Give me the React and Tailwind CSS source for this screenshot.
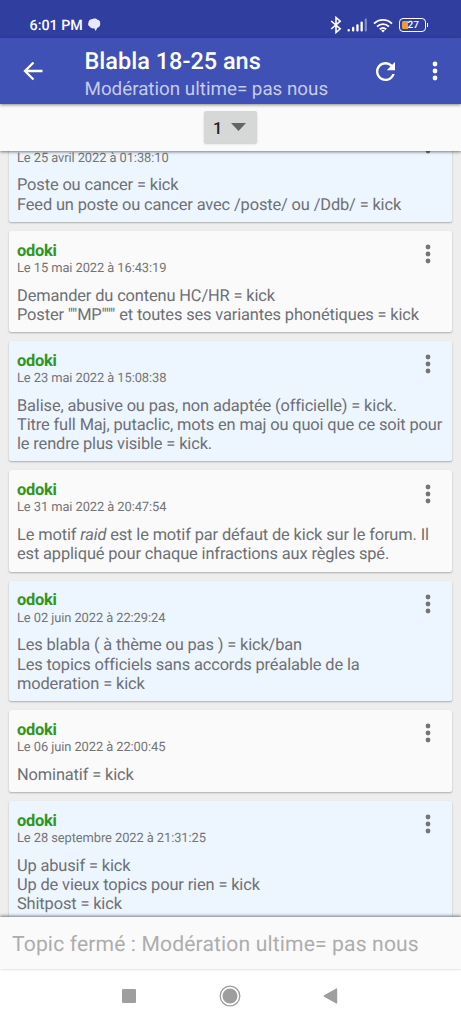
import React from 'react';

const posts = [
  { id: 1, date: 'Le 25 avril 2022 à 01:38:10', lines: ['Poste ou cancer = kick', 'Feed un poste ou cancer avec /poste/ ou /Ddb/ = kick'] },
  { id: 2, date: 'Le 15 mai 2022 à 16:43:19', lines: ['Demander du contenu HC/HR = kick', 'Poster ""MP""" et toutes ses variantes phonétiques = kick'] },
  {
    id: 3,
    date: 'Le 23 mai 2022 à 15:08:38',
    lines: [
      'Balise, abusive ou pas, non adaptée (officielle) = kick.',
      'Titre full Maj, putaclic, mots en maj ou quoi que ce soit pour',
      'le rendre plus visible = kick.',
    ],
  },
  {
    id: 4,
    date: 'Le 31 mai 2022 à 20:47:54',
    lines: [
      <>Le motif <em>raid</em> est le motif par défaut de kick sur le forum. Il</>,
      'est appliqué pour chaque infractions aux règles spé.',
    ],
  },
  {
    id: 5,
    date: 'Le 02 juin 2022 à 22:29:24',
    lines: ['Les blabla ( à thème ou pas ) = kick/ban', 'Les topics officiels sans accords préalable de la', 'moderation = kick'],
  },
  { id: 6, date: 'Le 06 juin 2022 à 22:00:45', lines: ['Nominatif = kick'] },
  {
    id: 7,
    date: 'Le 28 septembre 2022 à 21:31:25',
    lines: ['Up abusif = kick', 'Up de vieux topics pour rien = kick', 'Shitpost = kick'],
  },
];

const MoreIcon = ({ className }) => (
  <svg viewBox="0 0 6 20" className={className} fill="currentColor">
    <circle cx="3" cy="3" r="2.4" />
    <circle cx="3" cy="10" r="2.4" />
    <circle cx="3" cy="17" r="2.4" />
  </svg>
);

const StatusBar = () => (
  <div className="flex h-[38px] shrink-0 items-center bg-[#303f9f] pt-[12px] pr-[33px] pl-[29.5px] text-white">
    <span className="pt-[2px] text-[14.3px] leading-4 font-medium">6:01 PM</span>
    <svg viewBox="0 0 14 14" className="ml-[4px] h-[14px] w-[14px]" fill="#e8eafa">
      <path d="M4.6 1.2C7-.2 9.6.6 10.4 1.7c1.9.1 3.1 1.7 2.7 3.6.5 2.4-.8 4.1-2.7 4.5L8.6 13 7.2 10.3C5.2 10.8 3.2 9.9 2.7 8.6 1 7.7.7 5.9 1.5 4.7 1.2 3 2.7 1.3 4.6 1.2z" />
    </svg>
    <div className="ml-auto flex items-center">
      <svg viewBox="0 0 12 18" className="h-[18px] w-[12px]" fill="none" stroke="currentColor" strokeWidth="1.6">
        <path d="M1.2 5l9 7.8L6 16.5V1.5l4.2 3.7-9 7.8" />
      </svg>
      <svg viewBox="0 0 20 14" className="ml-[5px] h-[14px] w-[20px]" fill="currentColor">
        <rect x="0.5" y="11" width="2.4" height="2.5" rx="1" />
        <rect x="5" y="8.8" width="2.3" height="4.7" rx="1" />
        <rect x="9.3" y="6.3" width="2.3" height="7.2" rx="1" />
        <rect x="13.5" y="3.5" width="2.3" height="10" rx="1" />
        <rect x="17.7" y="0.5" width="2.2" height="13" rx="1" opacity="0.4" />
      </svg>
      <svg viewBox="0 0 20 15" className="ml-[6px] h-[15px] w-[20px]" fill="none" stroke="currentColor" strokeWidth="1.9">
        <path d="M1 5.6c5.2-5 12.8-5 18 0M4 8.6c3.5-3.3 8.5-3.3 12 0M6.8 11.3c2-1.7 4.4-1.7 6.4 0" />
        <path d="M8.1 12.5L10 14.4l1.9-1.9c-1.2-.9-2.6-.9-3.8 0z" fill="currentColor" stroke="none" />
      </svg>
      <div className="ml-[6px] flex items-center">
        <div className="flex h-[14px] w-[27px] items-center rounded-[4px] border-[1.5px] border-white pl-[2px]">
          <span className="h-[8px] w-[6px] rounded-l-[1.5px] bg-[#f09a33]" />
          <span className="pt-px text-[10px] leading-[10px] font-medium">27</span>
        </div>
        <span className="ml-px h-[4px] w-[1.5px] bg-white" />
      </div>
    </div>
  </div>
);

const AppBar = () => (
  <header className="z-10 flex h-[66px] shrink-0 items-center bg-[#3f51b5] pr-[23px] pl-[23px] text-white shadow-[0_1px_3px_rgba(0,0,0,0.45)]">
    <svg viewBox="0 0 20 20" className="h-[20px] w-[20px]" fill="none" stroke="currentColor" strokeWidth="2.3">
      <path d="M19.5 10H2.5M10.5 1.5L2 10l8.5 8.5" />
    </svg>
    <div className="ml-[41.5px] pt-[8px] whitespace-nowrap">
      <h1 className="text-[23.5px] leading-[28px] font-medium">Blabla 18-25 ans</h1>
      <p className="text-[18.8px] leading-[28px] text-[#c5cbe9]">Modération ultime= pas nous</p>
    </div>
    <svg viewBox="4 4 16 16" className="ml-auto h-[19px] w-[19px]" fill="currentColor">
      <path d="M17.65 6.35C16.2 4.9 14.21 4 12 4c-4.42 0-7.99 3.58-7.99 8s3.57 8 7.99 8c3.73 0 6.84-2.55 7.73-6h-2.08c-.82 2.33-3.04 4-5.65 4-3.31 0-6-2.69-6-6s2.69-6 6-6c1.66 0 3.14.69 4.22 1.78L13 11h7V4l-2.35 2.35z" />
    </svg>
    <MoreIcon className="ml-[37px] h-[20px] w-[6px]" />
  </header>
);

const PageBar = () => (
  <div className="z-[5] flex h-[47px] shrink-0 items-center justify-center bg-[#fafafa] shadow-[0_1px_3px_rgba(0,0,0,0.5)]">
    <button className="mb-px flex h-[32px] w-[53px] items-center rounded-[2px] bg-[#d6d7d7] pl-[9px] shadow-[0_1px_2px_rgba(0,0,0,0.2)]">
      <span className="w-[9px] pt-[3px] text-[16.4px] leading-5 font-medium text-[#212121]">1</span>
      <svg viewBox="0 0 15 8" className="ml-[9px] h-[8px] w-[15px]" fill="#646464">
        <path d="M0 0h15L7.5 8z" />
      </svg>
    </button>
  </div>
);

const Post = ({ post, tinted }) => (
  <article
    className={`shrink-0 rounded-[2px] px-[8px] pt-[10.8px] pb-[6.6px] shadow-[0_1px_2px_rgba(0,0,0,0.28)] ${
      tinted ? 'bg-[#edf5ff]' : 'bg-[#fafafa]'
    }`}
  >
    <div className="flex justify-between pr-[13px]">
      <div>
        <p className="text-[16.4px] leading-[19.2px] font-bold tracking-[-0.25px] text-[#2f9620]">odoki</p>
        <p className="text-[12.9px] leading-[15.4px] tracking-[-0.08px] text-[#757575]">{post.date}</p>
      </div>
      <MoreIcon className="mt-[2.6px] h-[20px] w-[6px] text-[#757575]" />
    </div>
    <div className="mt-[10.3px] mb-[0.3px] text-[16.4px] leading-[19.25px] tracking-[-0.13px] whitespace-nowrap text-[#6d7074]">
      {post.lines.map((line, index) => (
        <p key={index}>{line}</p>
      ))}
    </div>
  </article>
);

const NavBar = () => (
  <nav className="flex h-[55px] shrink-0 items-center justify-between bg-white pr-[123.5px] pb-[1px] pl-[122px] text-[#9e9e9e]">
    <span className="h-[14px] w-[14px] rounded-[1px] bg-[#9e9e9e]" />
    <svg viewBox="0 0 22 22" className="ml-[2px] h-[22px] w-[22px]" fill="currentColor">
      <circle cx="11" cy="11" r="9.8" fill="none" stroke="currentColor" strokeWidth="1.3" />
      <circle cx="11" cy="11" r="7.5" />
    </svg>
    <svg viewBox="0 0 15 16" className="h-[16px] w-[15px]" fill="currentColor">
      <path d="M1 7.3L13.3.4c.5-.2.9 0 .9.5v14.2c0 .5-.4.7-.9.5L1 8.7c-.5-.4-.5-1 0-1.4z" />
    </svg>
  </nav>
);

const App = () => {
  return (
    <div className="flex h-[1024px] w-[461px] flex-col overflow-hidden bg-[#eeeeee] font-[Roboto,sans-serif] [text-rendering:geometricPrecision]">
      <StatusBar />
      <AppBar />
      <PageBar />
      {/* the list is scrolled a little, so the first post starts under the page bar */}
      <main className="flex min-h-0 flex-1 flex-col overflow-hidden px-[9px]">
        <div className="-mt-[30.4px] flex flex-col gap-[9.1px]">
          {posts.map((post, index) => (
            <Post key={post.id} post={post} tinted={index % 2 === 0} />
          ))}
        </div>
      </main>
      <div className="z-[5] flex h-[52px] shrink-0 items-center bg-[#fafafa] px-[12px] pt-[3px] shadow-[0_-1px_3px_rgba(0,0,0,0.5)]">
        <span className="text-[21.1px] leading-6 tracking-[0.14px] whitespace-nowrap text-[#adadad]">
          Topic fermé : Modération ultime= pas nous
        </span>
      </div>
      <NavBar />
    </div>
  );
};

export default App;
